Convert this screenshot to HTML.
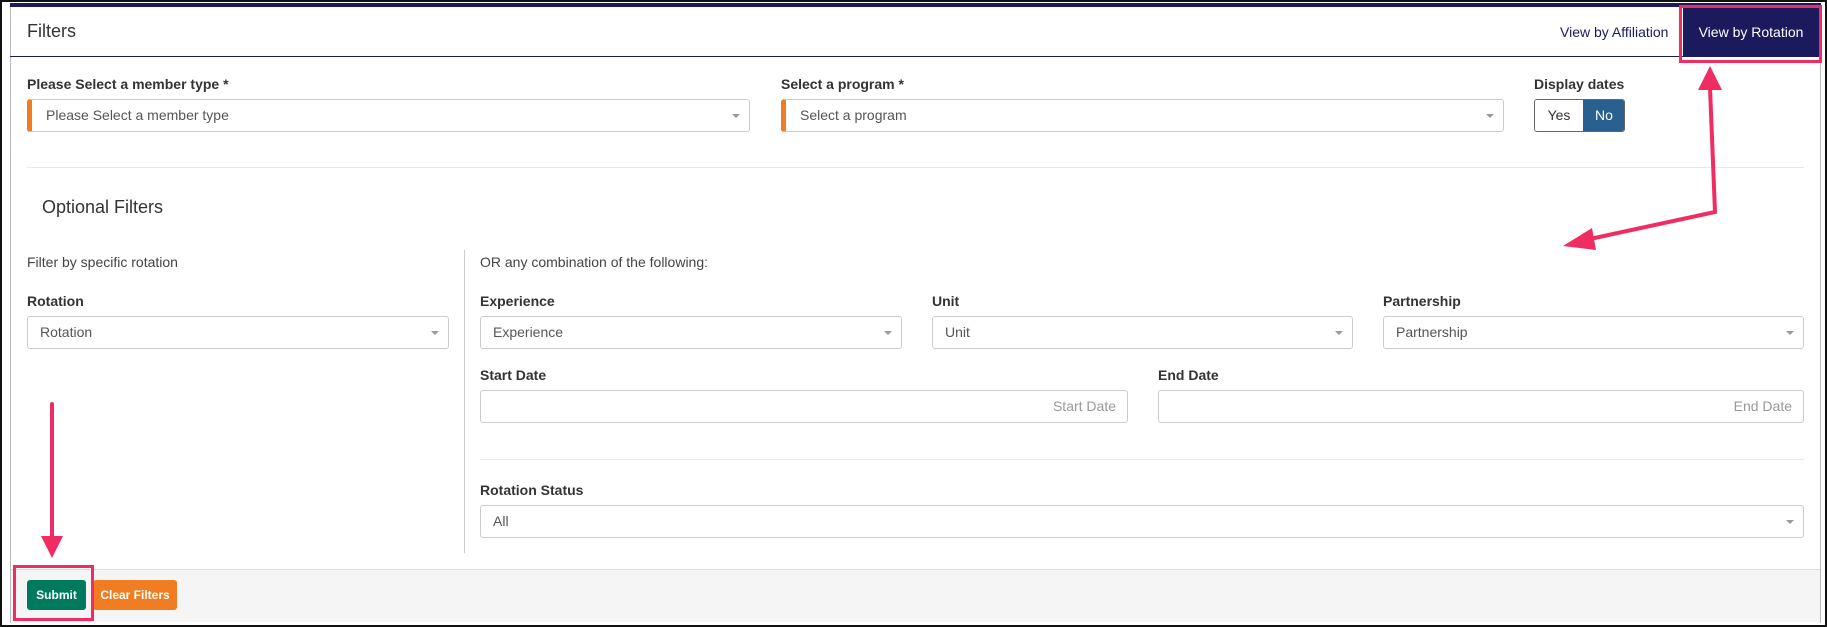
<!DOCTYPE html>
<html><head><style>
*{box-sizing:border-box;margin:0;padding:0}
body{width:1827px;height:627px;background:#fff;font-family:"Liberation Sans",Arial,sans-serif;position:relative;overflow:hidden;color:#333}
.a{position:absolute}
.lbl{position:absolute;font-size:14px;font-weight:bold;color:#333}
.txt{position:absolute;font-size:14px;color:#444}
.sel{position:absolute;height:33px;border:1px solid #ccc;border-radius:3px;background:#fff;font-size:14px;color:#555;padding:0 12px;line-height:31px}
.sel:after{content:"";position:absolute;right:9px;top:14px;border-left:4px solid transparent;border-right:4px solid transparent;border-top:4px solid #999}
.req{border-left:5px solid #f07d22;padding-left:14px}
.inp{position:absolute;height:33px;border:1px solid #ccc;border-radius:3px;background:#fff;font-size:14px;color:#999;text-align:right;padding:0 11px;line-height:31px}
</style></head><body>
<div class="a" style="left:0;top:0;width:1827px;height:627px;border:2px solid #111"></div>
<div class="a" style="left:10px;top:3px;width:1811px;height:620px;border-left:1px solid #bbb;border-right:1px solid #bbb"></div>
<div class="a" style="left:10px;top:3px;width:1811px;height:4px;background:#1b1a5c"></div>
<div class="a" style="left:27px;top:21px;font-size:18px;color:#333">Filters</div>
<div class="a" style="left:10px;top:56px;width:1811px;height:1px;background:#1b1a5c"></div>
<div class="a" style="left:1560px;top:24px;font-size:14px;color:#1b1a5c">View by Affiliation</div>
<div class="a" style="left:1683px;top:8px;width:136px;height:49px;background:#1b1a5c;color:#fff;font-size:14px;text-align:center;line-height:48px">View by Rotation</div>
<div class="a" style="left:1679px;top:5px;width:143px;height:58px;border:3px solid #ef2d63"></div>

<div class="lbl" style="left:27px;top:76px">Please Select a member type *</div>
<div class="sel req" style="left:27px;top:99px;width:723px">Please Select a member type</div>
<div class="lbl" style="left:781px;top:76px">Select a program *</div>
<div class="sel req" style="left:781px;top:99px;width:723px">Select a program</div>
<div class="lbl" style="left:1534px;top:76px">Display dates</div>
<div class="a" style="left:1534px;top:99px;width:91px;height:33px;border:1px solid #666;border-radius:3px;overflow:hidden;font-size:14px">
<div class="a" style="left:0;top:0;width:48px;height:31px;background:#fff;text-align:center;line-height:31px;color:#333">Yes</div>
<div class="a" style="left:48px;top:0;width:42px;height:31px;background:#286090;color:#fff;text-align:center;line-height:31px">No</div></div>
<div class="a" style="left:27px;top:167px;width:1777px;height:1px;background:#e8e8e8"></div>
<div class="a" style="left:42px;top:197px;font-size:18px;color:#333">Optional Filters</div>

<div class="txt" style="left:27px;top:254px">Filter by specific rotation</div>
<div class="a" style="left:464px;top:250px;width:1px;height:303px;background:#ccc"></div>
<div class="txt" style="left:480px;top:254px">OR any combination of the following:</div>
<div class="lbl" style="left:27px;top:293px">Rotation</div>
<div class="sel" style="left:27px;top:316px;width:422px">Rotation</div>
<div class="lbl" style="left:480px;top:293px">Experience</div>
<div class="sel" style="left:480px;top:316px;width:422px">Experience</div>
<div class="lbl" style="left:932px;top:293px">Unit</div>
<div class="sel" style="left:932px;top:316px;width:421px">Unit</div>
<div class="lbl" style="left:1383px;top:293px">Partnership</div>
<div class="sel" style="left:1383px;top:316px;width:421px">Partnership</div>
<div class="lbl" style="left:480px;top:367px">Start Date</div>
<div class="inp" style="left:480px;top:390px;width:648px">Start Date</div>
<div class="lbl" style="left:1158px;top:367px">End Date</div>
<div class="inp" style="left:1158px;top:390px;width:646px">End Date</div>
<div class="a" style="left:480px;top:459px;width:1324px;height:1px;background:#e8e8e8"></div>
<div class="lbl" style="left:480px;top:482px">Rotation Status</div>
<div class="sel" style="left:480px;top:505px;width:1324px">All</div>

<div class="a" style="left:11px;top:569px;width:1809px;height:53px;background:#f5f5f5;border-top:1px solid #ddd"></div>
<div class="a" style="left:27px;top:580px;width:59px;height:30px;background:#007a5e;border-radius:3px;color:#fff;font-size:12px;font-weight:bold;text-align:center;line-height:30px">Submit</div>
<div class="a" style="left:93px;top:580px;width:84px;height:30px;background:#f07d22;border-radius:3px;color:#fff;font-size:12px;font-weight:bold;text-align:center;line-height:30px">Clear Filters</div>
<div class="a" style="left:13px;top:565px;width:81px;height:56px;border:3px solid #ef2d63"></div>

<svg class="a" style="left:0;top:0" width="1827" height="627">
<g stroke="#ef2d63" stroke-width="4" fill="none" stroke-linecap="round">
<line x1="52" y1="404" x2="52" y2="540"/>
<polyline points="1710,88 1715,212 1590,239"/>
</g>
<g fill="#ef2d63">
<polygon points="41,536 63,536 52,558"/>
<polygon points="1698,90 1722,90 1710,66"/>
<polygon points="1592,228 1596,250 1563,246"/>
</g>
</svg>
</body></html>
